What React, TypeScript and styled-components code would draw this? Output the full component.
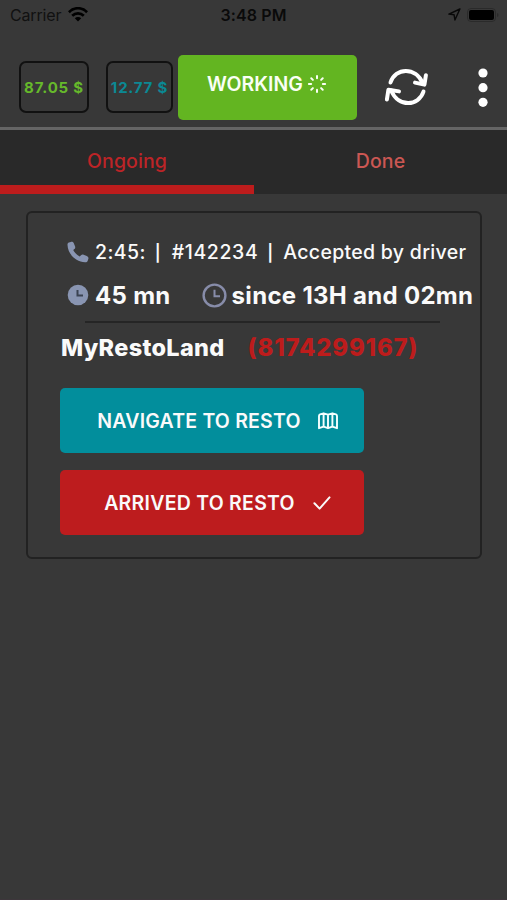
import React from "react";
import styled, { createGlobalStyle } from "styled-components";

const GlobalStyle = createGlobalStyle`
  * { box-sizing: border-box; }
  body { margin: 0; background: #383838; }
`;

const Screen = styled.main`
  width: 507px;
  height: 900px;
  overflow: hidden;
  background: #383838;
  font-family: Inter, "Liberation Sans", sans-serif;
  color: #fafafa;
  border-bottom: 1px solid #3d363b;
`;

const StatusBar = styled.div`
  display: grid;
  grid-template-columns: 1fr auto 1fr;
  align-items: center;
  height: 29px;
  padding: 0 8px 0 10px;
  color: #0a0a0a;
  font-size: 16px;
`;

const Carrier = styled.div`
  display: flex;
  align-items: center;
  gap: 7px;
  letter-spacing: -0.15px;
  color: #111;
`;

const Clock = styled.div`
  font-weight: 600;
  margin-right: 2px;
  letter-spacing: 0.1px;
`;

const StatusIcons = styled.div`
  display: flex;
  justify-content: flex-end;
  align-items: center;
  gap: 6px;
`;

const Header = styled.header`
  display: flex;
  height: 101px;
  padding-left: 19px;
  border-bottom: 3px solid #656565;
`;

const Amount = styled.div<{ $color: string; $width: number; $gap: number }>`
  display: flex;
  align-items: center;
  justify-content: center;
  width: ${(p) => p.$width}px;
  height: 52px;
  margin: 32px ${(p) => p.$gap}px 0 0;
  border: 2px solid #111;
  border-radius: 7px;
  color: ${(p) => p.$color};
  font-size: 15px;
  font-weight: 700;
  letter-spacing: 0.8px;
  white-space: nowrap;
`;

const WorkingButton = styled.button`
  display: flex;
  align-items: center;
  gap: 4px;
  width: 179px;
  height: 65px;
  margin-top: 26px;
  padding: 0 0 7px 29px;
  border: 0;
  border-radius: 5px;
  background: #63b521;
  color: #fafff5;
  font: 600 19.5px Inter, sans-serif;
`;

const IconButton = styled.button<{ $left: number; $top: number }>`
  display: block;
  align-self: flex-start;
  padding: 0;
  border: 0;
  background: none;
  color: #fff;
  margin: ${(p) => p.$top}px 0 0 ${(p) => p.$left}px;
  svg { display: block; }
`;

const Tabs = styled.nav`
  display: grid;
  grid-template-columns: 254px 253px;
  height: 64px;
  background: #292929;
`;

const Tab = styled.div<{ $active?: boolean }>`
  display: flex;
  align-items: center;
  justify-content: center;
  height: 64px;
  padding-top: ${(p) => (p.$active ? 7 : 0)}px;
  padding-bottom: ${(p) => (p.$active ? 0 : 2)}px;
  border-bottom: ${(p) => (p.$active ? "9px solid #bd1c1c" : "0")};
  color: ${(p) => (p.$active ? "#bd2427" : "#cb5753")};
  font-size: 19.5px;
  font-weight: 500;
  letter-spacing: 0.1px;
`;

const Card = styled.section`
  width: 456px;
  height: 348px;
  margin: 17px 0 0 26px;
  padding-left: 33px;
  border: 2px solid #222;
  border-radius: 6px;
`;

const OrderLine = styled.div`
  display: flex;
  align-items: center;
  height: 30px;
  margin-top: 24px;
  padding-left: 6px;
  font-size: 19.5px;
  font-weight: 500;
  white-space: pre;
`;

const TimeLine = styled(OrderLine)`
  margin-top: 13px;
  font-size: 24px;
  font-weight: 700;
`;

const Label = styled.span<{ $left?: number; $spacing?: number }>`
  margin-left: ${(p) => p.$left ?? 0}px;
  letter-spacing: ${(p) => p.$spacing ?? 0}px;
`;

const Separator = styled.span`
  width: 8px;
  margin: 1px 0 0 8px;
  font-size: 16.5px;
  font-weight: 600;
  text-align: center;
`;

const IconSlot = styled.span<{ $left?: number }>`
  display: flex;
  margin-left: ${(p) => p.$left ?? 0}px;
`;

const Divider = styled.hr`
  width: 355px;
  height: 2px;
  margin: 11px 0 0 24px;
  border: 0;
  background: #252525;
`;

const Restaurant = styled.div`
  display: flex;
  align-items: center;
  height: 30px;
  margin-top: 9px;
  font-size: 23.5px;
  font-weight: 800;
  letter-spacing: 0.3px;
  white-space: nowrap;
`;

const Phone = styled.span`
  margin-left: 23px;
  color: #bd1c1c;
  font-size: 24px;
  letter-spacing: 0.75px;
`;

const Action = styled.button<{ $color: string; $top: number; $gap: number; $spacing: number }>`
  display: flex;
  align-items: center;
  justify-content: center;
  gap: ${(p) => p.$gap}px;
  width: 304px;
  height: 65px;
  margin: ${(p) => p.$top}px 0 0 -1px;
  padding: 0 0 0 11px;
  border: 0;
  border-radius: 5px;
  background: ${(p) => p.$color};
  color: #fafafa;
  font: 600 19.5px Inter, sans-serif;
  letter-spacing: ${(p) => p.$spacing}px;
  white-space: nowrap;
`;

const WifiIcon = () => (
  <svg width="20" height="15" viewBox="0 0 20 15" fill="none" stroke="#000" strokeWidth="2.7">
    <path d="M.9 5.2C6-.1 14-.1 19.1 5.2M4.2 8.7c3.3-3.2 8.3-3.2 11.6 0" />
    <path d="M10 14.5 6.8 11.3a4.6 4.6 0 0 1 6.4 0Z" fill="#000" stroke="none" />
  </svg>
);

const LocationIcon = () => (
  <svg width="13" height="13" viewBox="0 0 13 13" fill="none" stroke="#080808" strokeWidth="1.4" strokeLinejoin="round">
    <path d="M11.9 1 .9 6.1l5.2.7.8 5.2Z" />
  </svg>
);

const BatteryIcon = () => (
  <svg width="32" height="14" viewBox="0 0 32 14">
    <rect x=".5" y=".5" width="28" height="13" rx="3.5" fill="none" stroke="#2a2a2a" />
    <rect x="2" y="2" width="25" height="10" rx="2" fill="#000" />
    <path d="M30 5v4c2-.7 2-3.3 0-4Z" fill="#2a2a2a" />
  </svg>
);

const SpinnerIcon = () => (
  <svg width="20" height="20" viewBox="-10 -10 20 20" stroke="#fafff5" strokeWidth="2" strokeLinecap="round">
    {[0, 45, 90, 135, 180, 225, 270, 315].map((angle) => (
      <path key={angle} d="M0-5.8v-2.3" transform={`rotate(${angle})`} />
    ))}
  </svg>
);

const RefreshIcon = () => (
  <svg width="46" height="42" viewBox="0 0 46 42" fill="none" stroke="#fff" strokeWidth="4" strokeLinecap="round" strokeLinejoin="round">
    <path d="M6.5 16.5C11.2 1.5 31.8.2 38.8 17.5" />
    <path d="M31 16.6 40.4 18.6 41.9 9.2" />
    <path d="M39.5 25.5C34.8 40.5 14.2 41.8 7.2 24.5" />
    <path d="M15 25.4 4.4 23.7 2.9 33.5" />
  </svg>
);

const MoreIcon = () => (
  <svg width="10" height="40" viewBox="0 0 10 40" fill="#fff">
    <circle cx="5" cy="5" r="4.6" />
    <circle cx="5" cy="19.7" r="4.6" />
    <circle cx="5" cy="34.3" r="4.6" />
  </svg>
);

const CallIcon = () => (
  <svg width="22" height="22" viewBox="0 0 22 22" fill="#8995b2">
    <path d="M1.9 1.6 3.8.9c1.3-.4 2.4.1 2.9 1.2L8 5.3c.5 1.2.2 2-.6 2.7L6.2 9.1c1.4 2.7 3.5 4.9 6.5 6.3l1.3-1.2c.8-.8 1.7-.9 2.6-.5l3.2 1.4c1.4.6 2 1.7 1.5 3l-.6 1.6c-.4 1.1-1.4 1.7-2.6 1.6C8.5 20.6.9 13.2.5 4c-.1-1.1.4-2 1.4-2.4Z" />
  </svg>
);

const SolidClockIcon = () => (
  <svg width="22" height="22" viewBox="0 0 22 22">
    <circle cx="11" cy="11" r="10.3" fill="#8995b2" />
    <path d="M10.5 6v5.5H16" fill="none" stroke="#3b4352" strokeWidth="2" />
  </svg>
);

const OutlineClockIcon = () => (
  <svg width="25" height="25" viewBox="0 0 25 25" fill="none" stroke="#878ca9">
    <circle cx="12.5" cy="12.5" r="10.9" strokeWidth="2.4" />
    <path d="M12.5 6.8v6.5h5.5" strokeWidth="2" />
  </svg>
);

const MapIcon = () => (
  <svg width="20" height="18" viewBox="0 0 20 18" fill="none" stroke="#f5ffff" strokeWidth="1.9" strokeLinejoin="round">
    <path d="M1 4Q1 2.8 2 2.4L5.6 1.3 10 2.6l4.4-1.3L18 2.4q1 .4 1 1.6v12.2l-4.6-1.5-4.4 1.5-4.4-1.5L1 16.2ZM5.6 1.3v13.4M10 2.6v13.6M14.4 1.3v13.4" />
  </svg>
);

const CheckIcon = () => (
  <svg width="18" height="14" viewBox="0 0 18 14" fill="none" stroke="#fafafa" strokeWidth="2" strokeLinecap="round" strokeLinejoin="round">
    <path d="m1.4 7.2 5.2 5.4L16.5 1.4" />
  </svg>
);

export default function App() {
  return (
    <Screen>
      <GlobalStyle />
      <StatusBar>
        <Carrier>Carrier <WifiIcon /></Carrier>
        <Clock>3:48 PM</Clock>
        <StatusIcons><LocationIcon /><BatteryIcon /></StatusIcons>
      </StatusBar>
      <Header>
        <Amount $color="#66b92b" $width={70} $gap={17}>87.05 $</Amount>
        <Amount $color="#0b8994" $width={67} $gap={5}>12.77 $</Amount>
        <WorkingButton>WORKING<SpinnerIcon /></WorkingButton>
        <IconButton $left={27} $top={37} aria-label="Refresh"><RefreshIcon /></IconButton>
        <IconButton $left={48} $top={39} aria-label="More"><MoreIcon /></IconButton>
      </Header>
      <Tabs>
        <Tab $active>Ongoing</Tab>
        <Tab>Done</Tab>
      </Tabs>
      <Card>
        <OrderLine>
          <CallIcon />
          <Label $left={6} $spacing={0.4}>2:45:</Label>
          <Separator>|</Separator>
          <Label $left={10} $spacing={0.6}>#142234</Label>
          <Separator>|</Separator>
          <Label $left={9} $spacing={0.3}>Accepted by driver</Label>
        </OrderLine>
        <TimeLine>
          <SolidClockIcon />
          <Label $left={6} $spacing={0.3}>45 mn</Label>
          <IconSlot $left={31}><OutlineClockIcon /></IconSlot>
          <Label $left={5} $spacing={0.3}>since 13H and 02mn</Label>
        </TimeLine>
        <Divider />
        <Restaurant>MyRestoLand<Phone>(8174299167)</Phone></Restaurant>
        <Action $color="#028e9c" $top={26} $gap={17} $spacing={0.2}>NAVIGATE TO RESTO<MapIcon /></Action>
        <Action $color="#bd1c1e" $top={17} $gap={18} $spacing={0.25}>ARRIVED TO RESTO<CheckIcon /></Action>
      </Card>
    </Screen>
  );
}
